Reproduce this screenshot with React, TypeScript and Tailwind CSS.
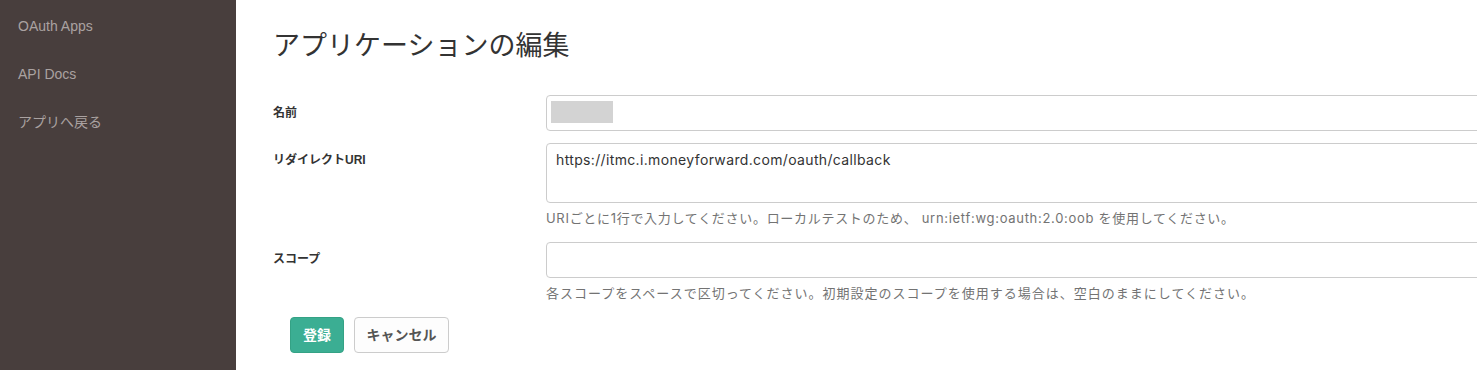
import React from 'react';

const font = { fontFamily: '"Liberation Sans", "Noto Sans CJK JP", sans-serif' };
const latin = { fontFamily: 'Inter, "Noto Sans CJK JP", sans-serif' };

const navItems = ['OAuth Apps', 'API Docs', 'アプリへ戻る'];

export default function App() {
  return (
    <div className="flex h-[370px] w-[1477px] overflow-hidden bg-white" style={font}>
      {/* Sidebar */}
      <aside className="w-[236px] shrink-0 bg-[#483e3d] pt-[16px]">
        {navItems.map((item) => (
          <div key={item} className="px-[18px] h-[48px] text-[14px] leading-[20px] text-[#aaa2a1]">
            {item}
          </div>
        ))}
      </aside>

      {/* Main */}
      <main className="flex-1 min-w-0 overflow-hidden pl-[37px]">
        <h1 className="pt-[30px] text-[27px] leading-[32px] font-normal text-[#333]">
          アプリケーションの編集
        </h1>

        <form className="mt-[33px]">
          {/* 名前 */}
          <div className="flex">
            <label className="w-[273px] shrink-0 pt-[10px] text-[12px] leading-[16px] font-bold text-[#333]">名前</label>
            <div className="w-[1000px] shrink-0 h-[36px] rounded-[4px] border border-[#cccccc] px-[4px] pt-[5px]">
              <div className="h-[22px] w-[62px] bg-[#d3d3d3]" />
            </div>
          </div>

          {/* リダイレクトURI */}
          <div className="flex mt-[12px]">
            <label className="w-[273px] shrink-0 pt-[9px] text-[12px] leading-[16px] font-bold text-[#333]">リダイレクトURI</label>
            <div className="shrink-0">
              <div
                className="w-[1000px] h-[60px] rounded-[4px] border border-[#cccccc] px-[9px] pt-[6px] text-[14px] leading-[20px] tracking-[0.35px] text-[#333]"
                style={latin}
              >
                https://itmc.i.moneyforward.com/oauth/callback
              </div>
              <p className="mt-[5px] text-[13px] leading-[20px] tracking-[0.7px] text-[#737373]" style={latin}>
                URIごとに1行で入力してください。ローカルテストのため、 urn:ietf:wg:oauth:2.0:oob を使用してください。
              </p>
            </div>
          </div>

          {/* スコープ */}
          <div className="flex mt-[14px]">
            <label className="w-[273px] shrink-0 pt-[9px] text-[12px] leading-[16px] font-bold text-[#333]">スコープ</label>
            <div className="shrink-0">
              <div className="w-[1000px] h-[36px] rounded-[4px] border border-[#cccccc]" />
              <p className="mt-[6px] text-[13px] leading-[20px] tracking-[1px] text-[#737373]">
                各スコープをスペースで区切ってください。初期設定のスコープを使用する場合は、空白のままにしてください。
              </p>
            </div>
          </div>

          {/* Buttons */}
          <div className="flex gap-[10px] pl-[17px] mt-[13px]">
            <button type="button" className="h-[36px] w-[54px] rounded-[4px] border border-[#34a285] bg-[#3bae93] text-[14px] font-bold text-white">
              登録
            </button>
            <button type="button" className="h-[36px] w-[95px] rounded-[4px] border border-[#cccccc] bg-[#fdfdfd] text-[14px] font-bold text-[#555]">
              キャンセル
            </button>
          </div>
        </form>
      </main>
    </div>
  );
}
